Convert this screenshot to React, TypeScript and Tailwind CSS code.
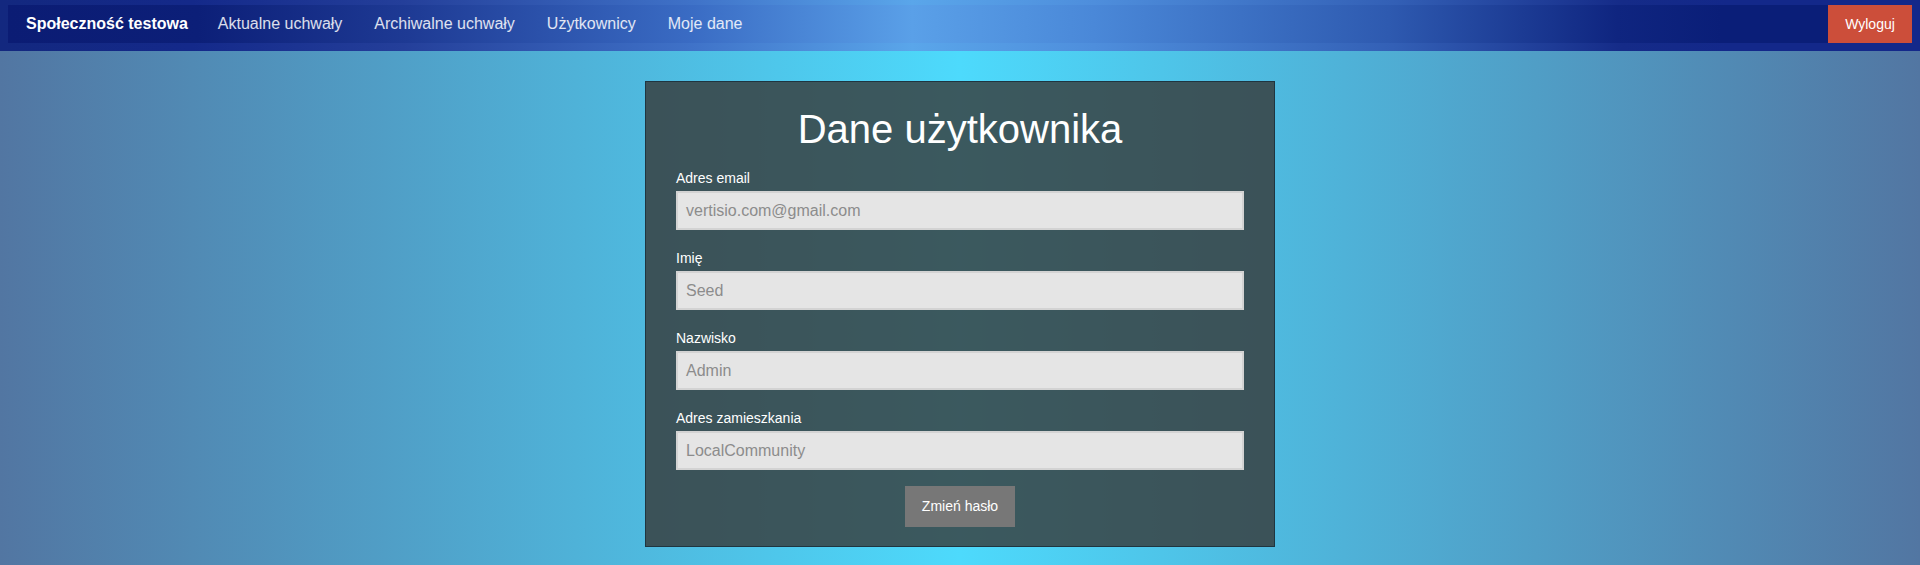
import React from "react";

const fields = [
  { label: "Adres email", value: "vertisio.com@gmail.com" },
  { label: "Imię", value: "Seed" },
  { label: "Nazwisko", value: "Admin" },
  { label: "Adres zamieszkania", value: "LocalCommunity" },
];

export default function App() {
  return (
    <div className="min-h-[565px] w-full font-['Liberation_Sans',Arial,sans-serif] bg-[linear-gradient(to_right,#5276a2_0%,#4ddafc_50%,#5276a2_100%)]">
      <nav className="h-[51px] w-full pt-[5px] pb-[8px] px-[8px] bg-[linear-gradient(to_right,#13287f_0%,#14298a_10%,#243f9a_21%,#3f72c8_36%,#5aa6ea_47.5%,#4e8edc_57%,#3360b6_72.5%,#152b88_84.5%,#13288a_90%,#13288a_100%)]">
        <div className="flex h-[38px] items-center pl-[18px] bg-[linear-gradient(to_right,#0b1c74_0%,#0c1f78_10%,#1e3a94_21%,#3a6cc4_36%,#5aa0e8_47.5%,#4a88d8_57%,#2e5ab0_72.5%,#0f2580_84.5%,#0a1e78_90%,#0a1e78_100%)]">
          <span className="mr-[30px] text-[16px] font-bold text-white">Społeczność testowa</span>
          <div className="flex items-center gap-8 text-[16px] text-white/85">
            <span>Aktualne uchwały</span>
            <span>Archiwalne uchwały</span>
            <span>Użytkownicy</span>
            <span>Moje dane</span>
          </div>
          <button className="ml-auto flex h-[38px] w-[84px] items-center justify-center bg-[#cc4e3a] text-[14px] text-white">
            Wyloguj
          </button>
        </div>
      </nav>
      <main className="flex justify-center pt-[30px]">
        <div className="w-[630px] border border-[#1f3540] bg-[rgba(54,52,50,0.78)] px-[30px] pt-[23px] pb-[19px]">
          <h1 className="text-center text-[40px] leading-[48px] text-white">Dane użytkownika</h1>
          <div className="mt-[15px] flex flex-col gap-[18px]">
            {fields.map((f) => (
              <div key={f.label} className="flex flex-col">
                <label className="mb-[3px] text-[14px] leading-5 text-white">{f.label}</label>
                <div className="flex h-[39px] items-center border-2 border-[#d3d3d3] bg-[#e5e5e5] px-[8px] text-[16px] text-[#8c8c8c]">
                  {f.value}
                </div>
              </div>
            ))}
          </div>
          <div className="mt-[16px] flex justify-center">
            <button className="flex h-[41px] w-[110px] items-center justify-center bg-[#777777] text-[14px] text-white">
              Zmień hasło
            </button>
          </div>
        </div>
      </main>
    </div>
  );
}
